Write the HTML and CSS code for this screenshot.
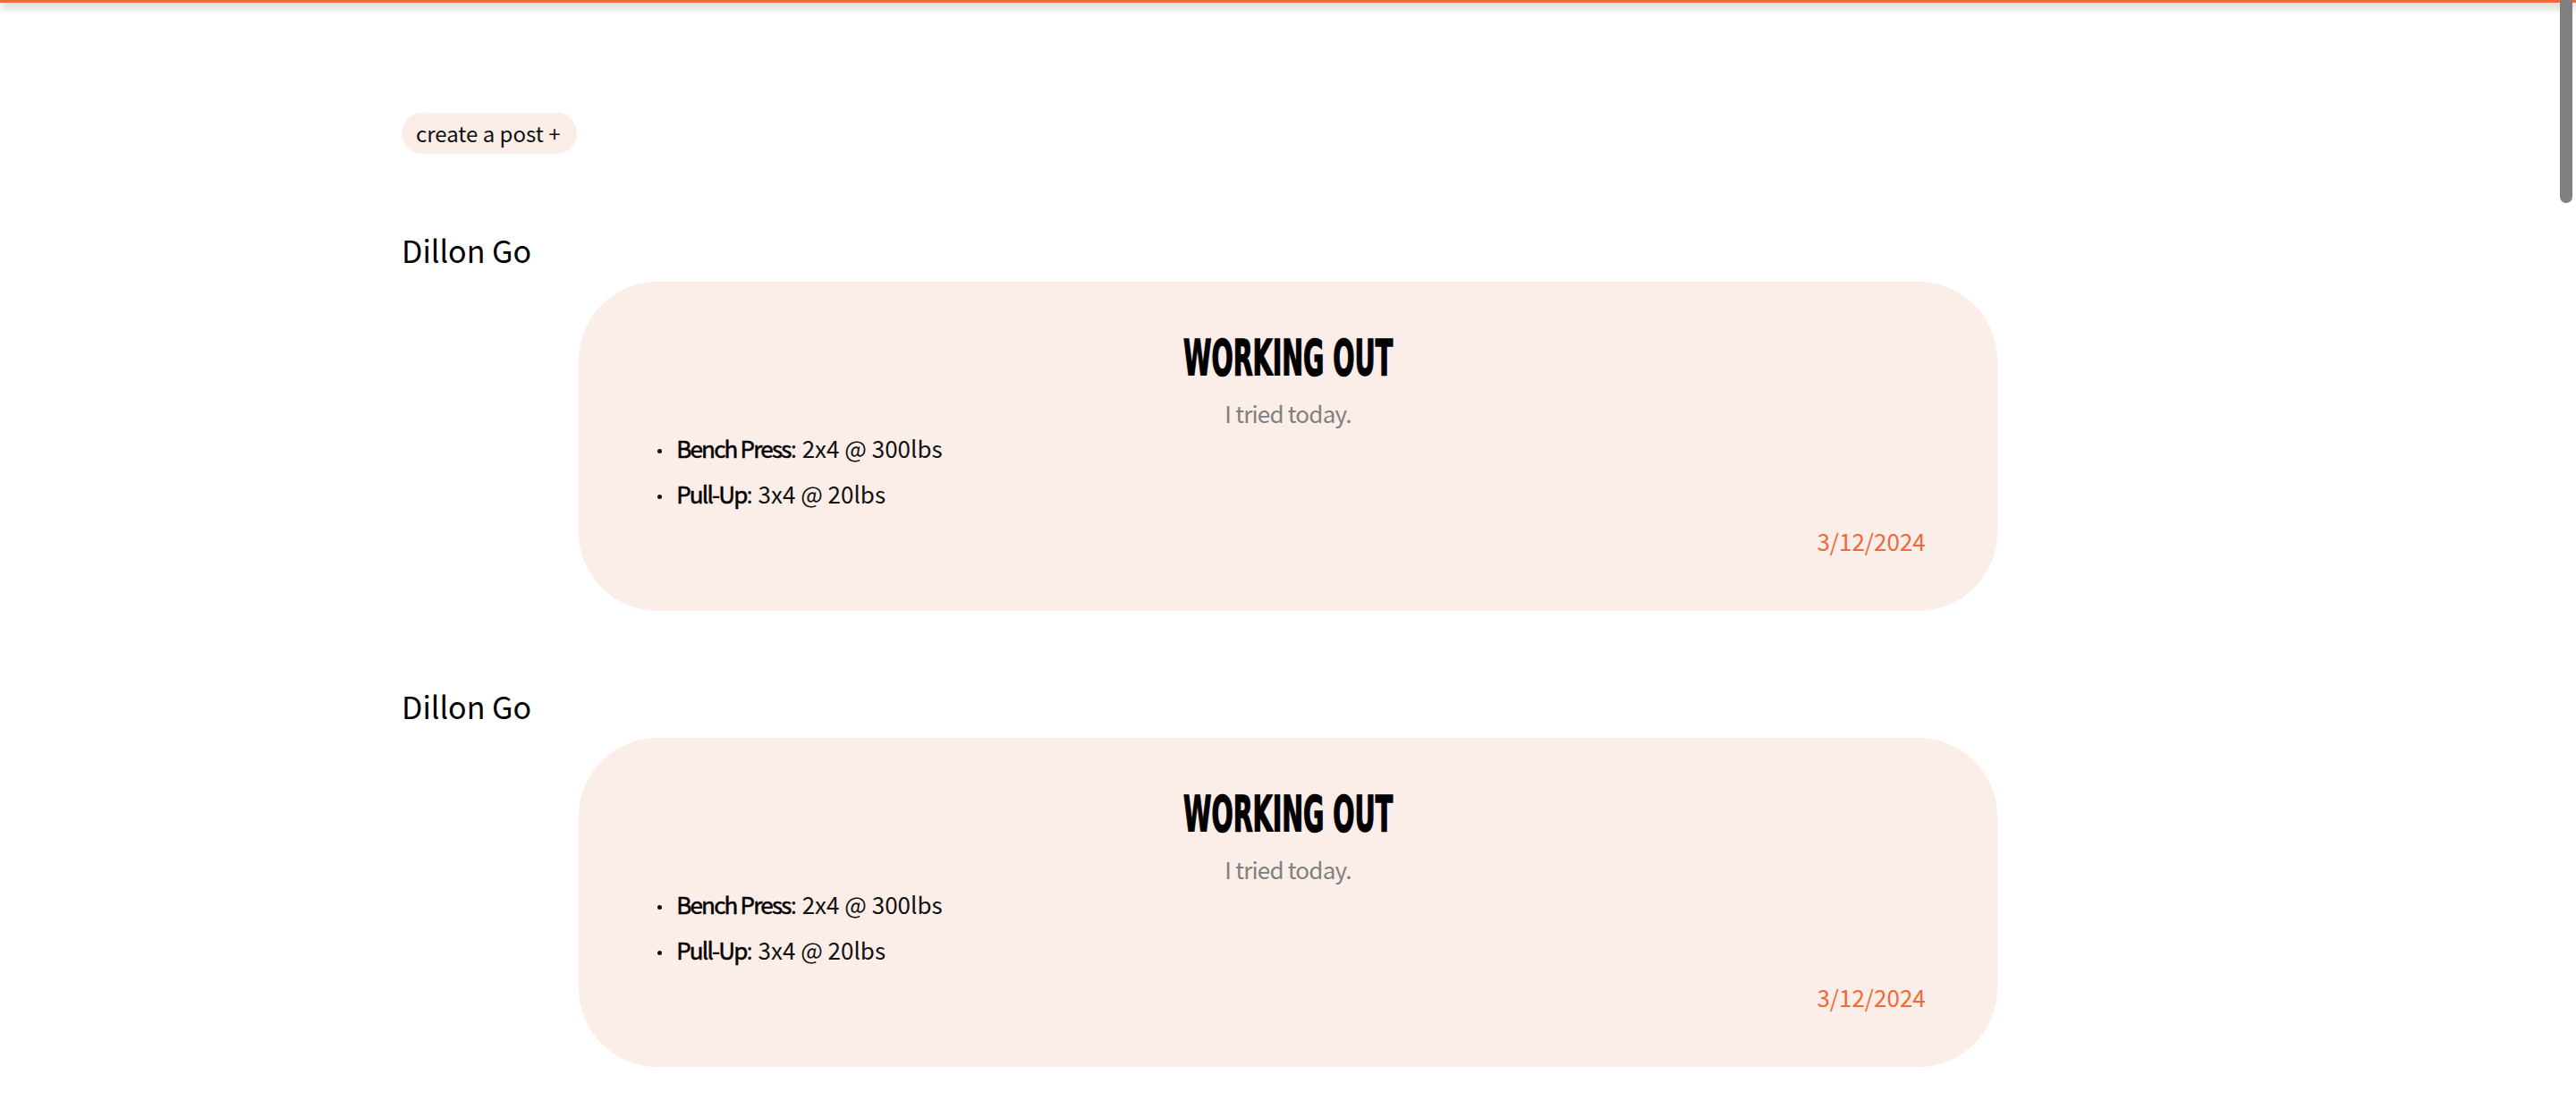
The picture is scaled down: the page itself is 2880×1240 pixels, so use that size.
FILE: index.html
```html
<!DOCTYPE html>
<html lang="en">
<head>
<meta charset="utf-8">
<title>Posts</title>
<link rel="stylesheet" href="styles.css">
</head>
<body>
<div class="topbar"></div>
<main class="feed">
  <div class="actions">
    <button class="create-btn">create a post +</button>
  </div>

  <section class="post">
    <div class="author">Dillon Go</div>
    <article class="card">
      <h2 class="card-title"><span>WORKING OUT</span></h2>
      <p class="card-desc">I tried today.</p>
      <ul class="exercises">
        <li><strong>Bench Press</strong>: 2x4 @ 300lbs</li>
        <li><strong>Pull-Up</strong>: 3x4 @ 20lbs</li>
      </ul>
      <div class="card-date">3/12/2024</div>
    </article>
  </section>

  <section class="post">
    <div class="author">Dillon Go</div>
    <article class="card">
      <h2 class="card-title"><span>WORKING OUT</span></h2>
      <p class="card-desc">I tried today.</p>
      <ul class="exercises">
        <li><strong>Bench Press</strong>: 2x4 @ 300lbs</li>
        <li><strong>Pull-Up</strong>: 3x4 @ 20lbs</li>
      </ul>
      <div class="card-date">3/12/2024</div>
    </article>
  </section>
</main>
<div class="scroll-thumb"></div>
</body>
</html>
```
FILE: styles.css
```css
html {
  overflow: hidden;
}
body {
  margin: 0;
  background: #ffffff;
  font-family: "Noto Sans CJK KR", "Noto Sans", sans-serif;
  color: #000;
}
.topbar {
  height: 3px;
  background: #f0693a;
  box-shadow: 0 4px 10px rgba(0, 0, 0, 0.45);
}
.feed {
  padding: 123px 449px 0;
}
.actions {
  display: flex;
}
.create-btn {
  font-family: inherit;
  font-size: 24px;
  line-height: 46px;
  height: 46px;
  padding: 0 19px 0 16px;
  border: none;
  border-radius: 23px;
  background: #fbede8;
  color: #111;
  cursor: pointer;
}
.post {
  margin-top: 88px;
}
.post + .post {
  margin-top: 87px;
}
.author {
  font-size: 34px;
  line-height: 40px;
  margin-bottom: 15px;
}
.card {
  width: 80%;
  margin: 0 auto;
  box-sizing: border-box;
  background: #fbede8;
  border-radius: 88px;
  padding: 55px 80px 62px;
}
.card-title {
  margin: 0;
  text-align: center;
  font-family: "DejaVu Sans Condensed", "DejaVu Sans", sans-serif;
  font-weight: bold;
  font-size: 56px;
  line-height: 60px;
}
.card-title span {
  display: inline-block;
  transform: scaleX(0.565);
  -webkit-text-stroke: 1.5px #000;
}
.card-desc {
  margin: 17px 0 0;
  text-align: center;
  font-size: 26px;
  line-height: 30px;
  letter-spacing: -0.8px;
  color: #808080;
}
.exercises {
  list-style: none;
  margin: 8px 0 0;
  padding: 0;
}
.exercises li {
  font-size: 26px;
  line-height: 32px;
  color: #111;
}
.exercises li + li {
  margin-top: 19px;
}
.exercises li::before {
  content: "";
  display: inline-block;
  width: 5px;
  height: 5px;
  border-radius: 50%;
  background: #111;
  margin: 0 16px 0 8px;
  vertical-align: middle;
}
.exercises strong {
  font-weight: normal;
  color: #000;
  letter-spacing: -1.8px;
  -webkit-text-stroke: 0.5px #000;
}
.card-date {
  margin-top: 21px;
  text-align: right;
  font-size: 26px;
  line-height: 32px;
  color: #f0693a;
}
.scroll-thumb {
  position: fixed;
  top: 0;
  right: 4px;
  width: 14px;
  height: 227px;
  border-radius: 0 0 7px 7px;
  background: #808080;
}
```
